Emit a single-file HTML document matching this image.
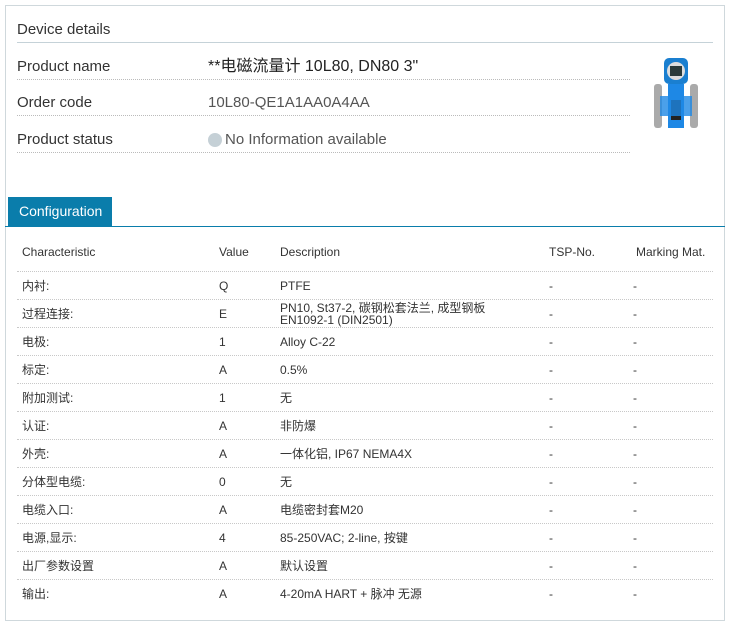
<!DOCTYPE html>
<html><head><meta charset="utf-8"><style>
body{margin:0;background:#fff;font-family:"Liberation Sans","Noto Sans CJK SC",sans-serif;color:#222;}
.box{position:absolute;left:5px;top:5px;width:718px;height:614px;border:1px solid #cfd8dc;}
.a{position:absolute;white-space:nowrap;}
.h{font-size:15px;color:#333;line-height:18px;}
.dl{position:absolute;left:17px;width:613px;border-top:1px dotted #bbb;height:0;}
.t{font-size:12px;color:#333;line-height:14px;}
.sep{position:absolute;left:17px;width:696px;border-top:1px dotted #c8c8c8;height:0;}
</style></head><body>
<div class="box"></div>
<div class="a h" style="left:17px;top:21px;">Device details</div>
<div style="position:absolute;left:17px;top:42px;width:696px;border-top:1px solid #c5d2d8;"></div>
<div class="a h" style="left:17px;top:58px;">Product name</div>
<div class="a" style="left:208px;top:58px;font-size:16px;line-height:18px;color:#222;">**电磁流量计 10L80, DN80 3"</div>
<div class="dl" style="top:79px"></div>
<div class="a h" style="left:17px;top:94px;">Order code</div>
<div class="a h" style="left:208px;top:94px;color:#555;">10L80-QE1A1AA0A4AA</div>
<div class="dl" style="top:115px"></div>
<div class="a h" style="left:17px;top:131px;">Product status</div>
<div class="a" style="left:208px;top:133px;width:14px;height:14px;border-radius:50%;background:#c5d0d6;"></div>
<div class="a h" style="left:225px;top:131px;color:#555;">No Information available</div>
<div class="dl" style="top:152px"></div>
<svg class="a" style="left:650px;top:56px" width="50" height="75" viewBox="0 0 50 75">
<rect x="14" y="2" width="24" height="26" rx="5" fill="#1a7fd0"/>
<circle cx="26" cy="15" r="9" fill="#ddd"/><rect x="20" y="10" width="12" height="10" fill="#2a3a3a"/>
<rect x="18" y="28" width="16" height="44" fill="#1e88e5"/><rect x="21" y="44" width="10" height="20" fill="#222"/>
<rect x="4" y="28" width="8" height="44" rx="3" fill="#aaa"/><rect x="40" y="28" width="8" height="44" rx="3" fill="#aaa"/>
<rect x="10" y="40" width="32" height="20" fill="#1e88e5" opacity=".8"/></svg>
<div class="a" style="left:8px;top:197px;width:104px;height:29px;background:#0a7dab;"></div>
<div class="a" style="left:19px;top:203px;font-size:14px;line-height:17px;color:#fff;">Configuration</div>
<div class="a" style="left:5px;top:226px;width:720px;height:1px;background:#0a7dab;"></div>
<div class="a t" style="left:22px;top:245px">Characteristic</div>
<div class="a t" style="left:219px;top:245px">Value</div>
<div class="a t" style="left:280px;top:245px">Description</div>
<div class="a t" style="left:549px;top:245px">TSP-No.</div>
<div class="a t" style="left:636px;top:245px">Marking Mat.</div>
<div class="sep" style="top:271px"></div>
<div id="rows"></div>
<script>
var r=[["内衬:","Q","PTFE"],["过程连接:","E","PN10, St37-2, 碳钢松套法兰, 成型钢板<br>EN1092-1 (DIN2501)"],["电极:","1","Alloy C-22"],["标定:","A","0.5%"],["附加测试:","1","无"],["认证:","A","非防爆"],["外壳:","A","一体化铝, IP67 NEMA4X"],["分体型电缆:","0","无"],["电缆入口:","A","电缆密封套M20"],["电源,显示:","4","85-250VAC; 2-line, 按键"],["出厂参数设置","A","默认设置"],["输出:","A","4-20mA HART + 脉冲 无源"]];
var h="";r.forEach(function(x,i){var y=279+i*28;var dy=i==1?-5:0;var lh=i==1?12:14;
h+='<div class="a t" style="left:22px;top:'+y+'px">'+x[0]+'</div><div class="a t" style="left:219px;top:'+y+'px">'+x[1]+'</div><div class="a t" style="left:280px;top:'+(y+dy)+'px;line-height:'+lh+'px">'+x[2]+'</div><div class="a t" style="left:549px;top:'+y+'px">-</div><div class="a t" style="left:633px;top:'+y+'px">-</div>';
if(i<11)h+='<div class="sep" style="top:'+(y+20)+'px"></div>';});
document.getElementById("rows").innerHTML=h;
</script>
</body></html>
